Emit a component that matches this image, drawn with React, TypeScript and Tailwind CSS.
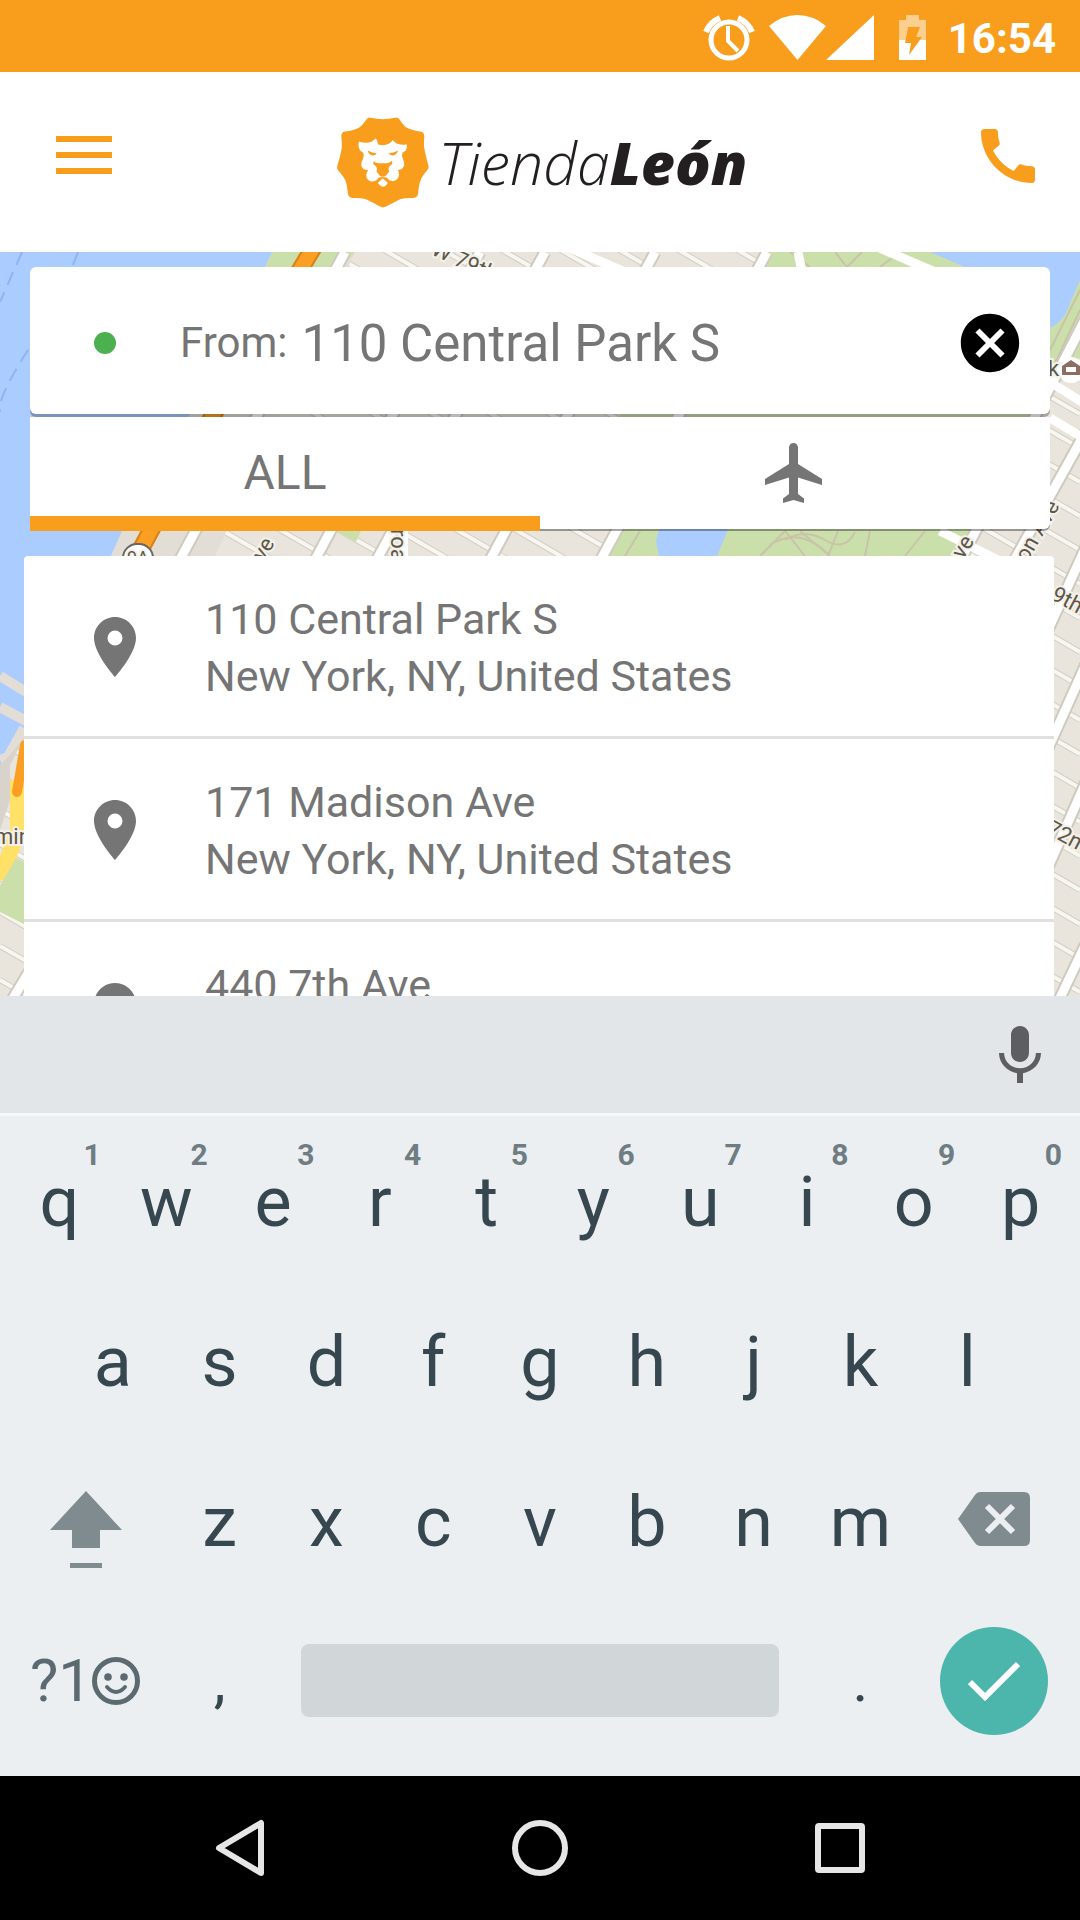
import { useState } from 'react';
import { MdCall, MdCancel, MdFlight, MdMic, MdPlace } from 'react-icons/md';

interface Place {
  id: string;
  address: string;
  city: string;
}

const places: Place[] = [
  { id: 'central-park', address: '110 Central Park S', city: 'New York, NY, United States' },
  { id: 'madison', address: '171 Madison Ave', city: 'New York, NY, United States' },
  { id: 'seventh', address: '440 7th Ave', city: 'New York, NY, United States' },
];

const topRow = ['q', 'w', 'e', 'r', 't', 'y', 'u', 'i', 'o', 'p'];
const middleRow = ['a', 's', 'd', 'f', 'g', 'h', 'j', 'k', 'l'];
const bottomRow = ['z', 'x', 'c', 'v', 'b', 'n', 'm'];

function StatusBar() {
  return (
    <div className="flex h-[72px] shrink-0 items-center justify-end bg-[#f99d1c] pr-6 text-white">
      <svg className="mt-1 h-[46px] w-[52px]" viewBox="0 0 52 46" fill="none" stroke="currentColor">
        <circle cx="26" cy="25" r="18" strokeWidth="5" />
        <path d="M25 11v15l10 10" strokeWidth="4" />
        <path d="M3 17A26 26 0 0 1 17 3M35 3a26 26 0 0 1 14 14" strokeWidth="6" />
      </svg>
      <svg className="mt-1 ml-[14px] h-[46px] w-[106px]" viewBox="0 0 106 46" fill="currentColor">
        <path d="M0 11Q13 0 28.500 0T57 11L28.500 45z" />
        <path d="M105 0v45H57z" />
      </svg>
      <svg className="mt-1 ml-6 h-[46px] w-[27px]" viewBox="0 0 27 46">
        <path d="M7 0h13v5h7v20H0V5h7z" fill="#fccf8f" />
        <path d="M0 25h27v20H0z" fill="#fff" />
        <path d="M9 12h12l-4 10h6L10 40l2-12H6z" fill="#f99d1c" />
      </svg>
      <span className="ml-[22px] pt-[6px] text-[42px] leading-none font-bold">16:54</span>
    </div>
  );
}

function LionBadge() {
  return (
    <svg className="h-[91px] w-[92px]" viewBox="47 48 277 274" aria-hidden="true">
      <path
        fill="#f99d1c"
        d="M148 50Q185 59 222 50Q231 48 236 56Q249 76 259 81Q272 88 299 92Q309 94 310 106Q307 136 311 148Q313 158 322 194Q325 202 318 209Q300 230 297 243Q293 256 291 280Q289 291 277 292Q251 291 239 295Q228 300 196 317Q185 324 175 317Q143 299 132 295Q120 291 93 292Q82 291 80 280Q77 254 74 243Q70 231 51 209Q46 203 48 195Q58 160 60 148Q63 136 60 106Q60 94 71 92Q100 88 111 81Q121 76 135 56Q141 48 148 50Z"
      />
      <path
        fill="#fff"
        d="M113 122Q146 133 163 113Q169 117 170 130C188 137 208 129 215 117C224 130 240 132 257 131C260 145 252 153 244 155Q241 164 246 175C254 193 247 208 230 207C240 225 229 243 212 241Q202 239 197 230H173C166 242 153 245 143 239C131 230 135 217 141 207C124 209 116 196 122 182Q130 165 126 156C115 151 109 138 113 122Z"
      />
      <path
        fill="#f99d1c"
        d="M158 181Q163 187 174 187H197Q207 187 212 180Q217 190 208 193Q199 199 204 212L194 225Q185 231 176 225L166 212Q170 199 161 193Q153 189 158 181ZM139 149Q152 157 167 157Q161 165 153 164Q142 161 139 149ZM231 149Q219 157 202 157Q209 165 217 164Q228 160 231 149Z"
      />
      <path d="M171 234Q185 225 199 234L185 246Z" fill="#f99d1c" />
      <path d="M170 246L185 233L200 246Q194 258 185 258Q176 257 170 246Z" fill="#fff" />
    </svg>
  );
}

function Header() {
  return (
    <header className="flex h-[180px] shrink-0 items-center justify-between bg-white pr-9 pl-14">
      <button aria-label="Menu" className="mb-[14px] flex w-14 flex-col gap-[10px]">
        <span className="h-[6px] w-full bg-[#f99d1c]" />
        <span className="h-[6px] w-full bg-[#f99d1c]" />
        <span className="h-[6px] w-full bg-[#f99d1c]" />
      </button>
      <a href="#" className="flex items-center gap-[10px]">
        <LionBadge />
        <span className="font-['Open_Sans'] text-[59px] leading-none text-[#231f20] italic">
          <span className="font-light">Tienda</span>
          <span className="font-extrabold">León</span>
        </span>
      </a>
      <button aria-label="Call" className="mb-3 text-[#f99d1c]">
        <MdCall size={72} />
      </button>
    </header>
  );
}

const avenues = [
  'M345 252L110 690', 'M480 252L240 700', 'M545 252L300 700', 'M655 252L415 700', 'M767 252L525 700',
  'M1090 310L940 600', 'M1090 424L920 730', 'M1090 538L1010 713', 'M1090 655L1010 833',
  'M1090 773L1010 953', 'M1090 935L1040 1040', 'M30 970L0 1020',
];

const streets = Array.from({ length: 46 }, (_, i) => -380 + i * 34);

function MapBackground() {
  return (
    <svg
      className="absolute inset-0 h-full w-full"
      viewBox="0 252 1080 744"
      preserveAspectRatio="xMidYMin slice"
      aria-hidden="true"
    >
      <rect y="252" width="1080" height="744" fill="#e9e5dc" />
      {streets.map((y) => (
        <path key={y} d={`M0 ${y}l1080 624`} stroke="#d3cec3" strokeWidth="6" />
      ))}
      {streets.map((y) => (
        <path key={y} d={`M0 ${y}l1080 624`} stroke="#f8f6f1" strokeWidth="4" />
      ))}

      {/* parks */}
      <path d="M235 330L355 252L215 556H100Z" fill="#e2ded5" />
      <path d="M272 252H355L342 267H265Z" fill="#cbdfab" />
      <path d="M336 531l20 11 5-11z" fill="#cbdfab" />
      <path d="M767 252H1090V345L1035 414L962 556H604L616 536L620 414L757 267Z" fill="#cbdfab" />
      <g fill="none" stroke="#c9c3a9" strokeWidth="2">
        <path d="M790 252l20 15M835 252l12 15 15-15M880 267l20-15M1080 290l-45 90M1080 310l-35 75" />
        <path d="M640 531l-15 25M760 556l25-25 20 25M785 540q20-12 40 0t30-8M828 556l10-25M865 556l5-25M905 556l20-25" />
        <path d="M770 545q30-20 60 11M800 531l30 25" />
      </g>

      {avenues.map((d) => (
        <path key={d} d={d} stroke="#cfcabf" strokeWidth="13" />
      ))}
      {avenues.map((d) => (
        <path key={d} d={d} stroke="#fff" strokeWidth="9" />
      ))}
      <path d="M798 252l4 20M565 246l60 26M875 246l60 26M940 531l60 30M1050 382l40 25M1050 418l40 24" stroke="#fff" strokeWidth="9" />
      <path d="M404 531v30" stroke="#fff" strokeWidth="8" />

      {/* rivers and ponds */}
      <path d="M0 252H272Q250 300 190 414L122 531L100 580L24 730L0 770Z" fill="#aaccff" />
      <path d="M930 252H1080V280L1065 315Q1055 328 1045 330L965 267Z" fill="#aaccff" />
      <path d="M660 525L656 541L659 556H717L730 525Z" fill="#aaccff" />
      <path d="M22 252L0 302M78 252Q60 300 28 350T0 412" fill="none" stroke="#8fb3f5" strokeWidth="2" strokeDasharray="14 8" />
      <path d="M0 676L26 692M0 707L26 721M24 728L8 757L0 760" fill="none" stroke="#e2ded5" strokeWidth="10" />
      <path d="M26 735L10 765V800L0 830V765L10 755Z" fill="#d8d4cc" />

      {/* highways */}
      <path d="M318 240L213 415L135 560" fill="none" stroke="#d98110" strokeWidth="18" />
      <path d="M318 240L213 415L135 560" fill="none" stroke="#fb9f24" strokeWidth="14" />
      <path d="M0 880L18 830V780" fill="none" stroke="#ffe168" strokeWidth="16" />
      <path d="M25 745L17 792" stroke="#fb9f24" strokeWidth="10" strokeLinecap="round" />
      <path d="M16 858L26 863V925L0 912V886Z" fill="#cbdfab" />

      <rect x="123" y="544" width="30" height="28" rx="14" fill="#fff" stroke="#666" strokeWidth="2" />
      <circle cx="1071" cy="370" r="13" fill="#fff" />
      <path d="M1062 366l9-6 9 6v9h-18zM1066 367v5h10v-5z" fill="#8d6e63" fillRule="evenodd" />

      <g fill="#5c5748" stroke="#f4f1ea" strokeWidth="4" paintOrder="stroke" fontSize="22">
        <text x="127" y="564" fontSize="18">9A</text>
        <text transform="translate(430 254) rotate(24)">W 79th</text>
        <text transform="translate(264 562) rotate(-60)">ve</text>
        <text transform="translate(391 529) rotate(90)">roa</text>
        <text transform="translate(963 560) rotate(-58)">ve</text>
        <text transform="translate(1027 563) rotate(-60)">on Ave</text>
        <text transform="translate(1050 599) rotate(28)">9th</text>
        <text transform="translate(1045 833) rotate(28)">72nd</text>
        <text x="1048" y="376">k</text>
        <text x="-6" y="844">min</text>
      </g>
    </svg>
  );
}

function SearchCard() {
  const [from, setFrom] = useState('110 Central Park S');
  const [tab, setTab] = useState('all');

  return (
    <div className="relative mx-[30px] mt-[15px]">
      <div className="flex h-[147px] items-center rounded-md bg-white pt-1 pr-[25px] pl-16 shadow-[0_3px_0_rgba(0,0,0,0.28)]">
        <span className="size-[22px] shrink-0 rounded-full bg-[#4caf50]" />
        <label htmlFor="from" className="ml-16 text-[42px] text-[#757575]">
          From:
        </label>
        <input
          id="from"
          type="text"
          value={from}
          onChange={(event) => setFrom(event.target.value)}
          className="ml-[14px] min-w-0 flex-1 bg-transparent pt-1 text-[51px] text-[#757575] outline-none"
        />
        <button aria-label="Clear" onClick={() => setFrom('')} className="text-black">
          <MdCancel size={70} />
        </button>
      </div>
      <div className="mt-[3px] grid h-[112px] grid-cols-2 rounded-b-md bg-white text-[48px] text-[#757575] shadow-[0_2px_0_rgba(0,0,0,0.35)]">
        <button onClick={() => setTab('all')} className="relative">
          ALL
          {tab === 'all' && <span className="absolute inset-x-0 top-[99px] h-[15px] bg-[#f99d1c]" />}
        </button>
        <button aria-label="Airports" onClick={() => setTab('air')} className="relative flex items-center justify-center">
          <MdFlight size={72} />
          {tab === 'air' && <span className="absolute inset-x-0 top-[99px] h-[15px] bg-[#f99d1c]" />}
        </button>
      </div>
    </div>
  );
}

function PlaceList() {
  return (
    <ul className="relative mt-[27px] mr-[26px] ml-6 rounded-t bg-white">
      {places.map((place) => (
        <li key={place.id} className="border-b-[3px] border-[#e0e0e0]">
          <button className="flex h-[180px] w-full items-center gap-[54px] pt-[2px] pl-[55px] text-left text-[#757575]">
            <MdPlace size={72} className="shrink-0" />
            <span className="pt-[2px] text-[43px] leading-[57px]">
              {place.address}
              <br />
              {place.city}
            </span>
          </button>
        </li>
      ))}
    </ul>
  );
}

function Key({ label, hint }: { label: string; hint?: string }) {
  return (
    <button className="relative col-span-2 text-center">
      {label}
      {hint && (
        <span className="absolute top-4 right-3 text-[30px] leading-[34px] font-bold text-[#6f7d82]">{hint}</span>
      )}
    </button>
  );
}

function Keyboard() {
  return (
    <div className="shrink-0 bg-[#ebeff2]">
      <div className="flex h-[117px] items-center justify-end bg-[#e2e6e9] pt-[2px] pr-6">
        <button aria-label="Voice input" className="text-[#5c5e60]">
          <MdMic size={72} />
        </button>
      </div>
      <div className="h-[3px] bg-[#f5f8fa]" />
      <div className="grid auto-rows-[160px] grid-cols-20 px-[6px] pt-[6px] pb-[14px] text-[70px] leading-[160px] text-[#37474f]">
        {topRow.map((letter, index) => (
          <Key key={letter} label={letter} hint={String((index + 1) % 10)} />
        ))}

        <span />
        {middleRow.map((letter) => (
          <Key key={letter} label={letter} />
        ))}
        <span />

        <button aria-label="Shift" className="col-span-3 flex items-center justify-center">
          <svg className="h-[92px] w-[72px]" viewBox="0 0 72 92" fill="#808b8f">
            <path d="M36 15l36 39H50v18H22V54H0zM20 87h32v5H20z" />
          </svg>
        </button>
        {bottomRow.map((letter) => (
          <Key key={letter} label={letter} />
        ))}
        <button aria-label="Backspace" className="col-span-3 flex items-center justify-center pb-[6px]">
          <svg className="h-[54px] w-[72px]" viewBox="0 0 72 54">
            <path d="M22 0h44q6 0 6 6v42q0 6-6 6H22q-3 0-5-3L0 27 17 3q2-3 5-3z" fill="#808b8f" />
            <path d="M29 14l26 26M55 14L29 40" stroke="#ebeff2" strokeWidth="6" />
          </svg>
        </button>

        <div className="col-span-20 grid grid-cols-20 items-center pb-[3px] text-[60px] leading-[156px]">
          <button aria-label="Symbols and emoji" className="col-span-3 flex items-center pl-6 text-[#5b6a70]">
            ?1
            <svg className="size-12" viewBox="0 0 48 48" fill="none" stroke="currentColor" strokeWidth="5">
              <circle cx="24" cy="24" r="21.500" />
              <circle cx="16" cy="20" r="3.800" fill="currentColor" stroke="none" />
              <circle cx="32" cy="20" r="3.800" fill="currentColor" stroke="none" />
              <path d="M15 30q9 10 18 0" strokeWidth="4" strokeLinecap="round" />
            </svg>
          </button>
          <Key label="," />
          <button aria-label="Space" className="col-span-10 mx-7 h-[73px] rounded-lg bg-[#d1d6d9]" />
          <Key label="." />
          <div className="col-span-3 flex justify-center">
            <button aria-label="Done" className="flex size-[108px] items-center justify-center rounded-full bg-[#4db6ac]">
              <svg className="h-10 w-[52px]" viewBox="0 0 52 40" fill="none" stroke="#fff" strokeWidth="6">
                <path d="M2 21l15 15L50 3" />
              </svg>
            </button>
          </div>
        </div>
      </div>
    </div>
  );
}

function NavigationBar() {
  return (
    <nav className="grid h-[144px] shrink-0 grid-cols-3 place-items-center bg-black px-[90px]">
      <button aria-label="Back">
        <svg className="size-15" viewBox="0 0 60 60" fill="none" stroke="#e6e6e6" strokeWidth="6" strokeLinejoin="round">
          <path d="M51 5v50L9 30z" />
        </svg>
      </button>
      <button aria-label="Home">
        <svg className="size-15" viewBox="0 0 60 60" fill="none" stroke="#e6e6e6" strokeWidth="6">
          <circle cx="30" cy="30" r="25" />
        </svg>
      </button>
      <button aria-label="Recent apps">
        <svg className="size-15" viewBox="0 0 60 60" fill="none" stroke="#e6e6e6" strokeWidth="6">
          <rect x="8" y="8" width="44" height="44" rx="1" />
        </svg>
      </button>
    </nav>
  );
}

export default function App() {
  return (
    <div className="flex h-screen flex-col overflow-hidden bg-white font-[Roboto,sans-serif]">
      <StatusBar />
      <Header />
      <main className="relative min-h-0 flex-1 overflow-hidden">
        <MapBackground />
        <SearchCard />
        <PlaceList />
      </main>
      <Keyboard />
      <NavigationBar />
    </div>
  );
}
